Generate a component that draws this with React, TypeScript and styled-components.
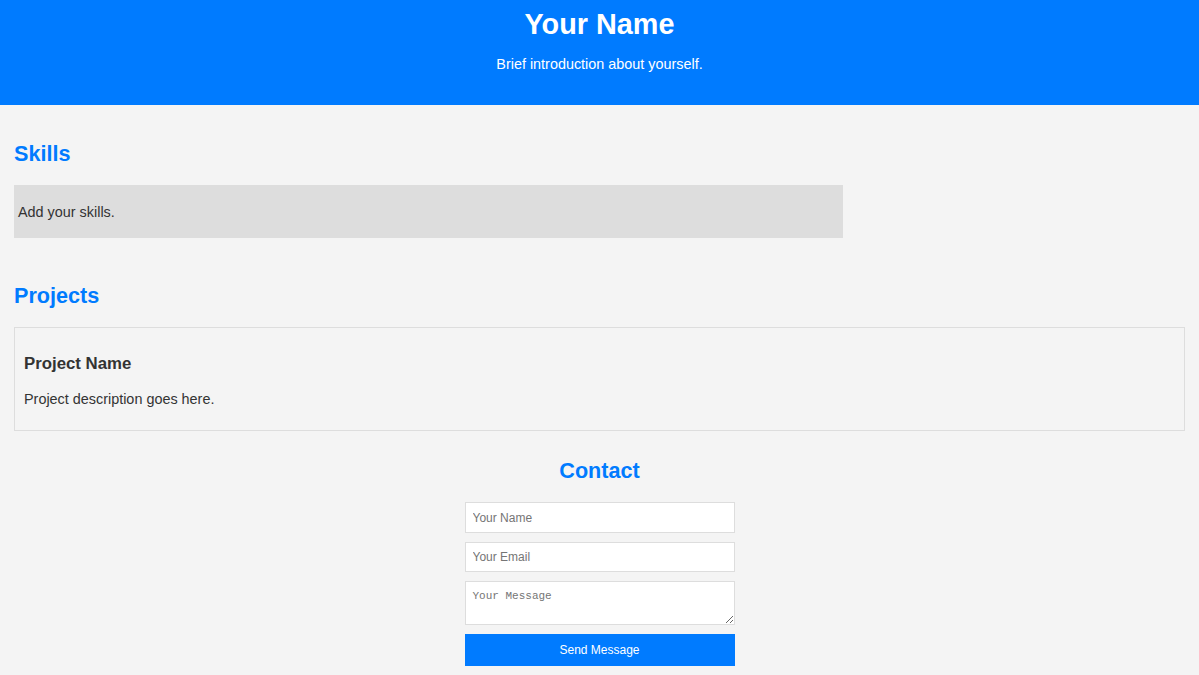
import React from "react";
import styled, { createGlobalStyle } from "styled-components";

const Global = createGlobalStyle`
  html, body { margin: 0; padding: 0; }
  body {
    background: #f4f4f4;
    color: #333;
    font-family: "Liberation Sans", Arial, sans-serif;
    font-size: 14.4px;
  }
  * { box-sizing: border-box; }
`;

const Header = styled.header`
  background: #007bff;
  color: #fff;
  text-align: center;
  height: 105px;
  padding-top: 8px;
`;

const Title = styled.h1`
  margin: 0;
  font-size: 28.8px;
  line-height: 33px;
  font-weight: bold;
`;

const Intro = styled.p`
  margin: 15px 0 0;
  font-size: 14.4px;
  line-height: 16.6px;
`;

const Main = styled.main`
  padding: 0 14px;
`;

const SectionTitle = styled.h2<{ $top: number; $bottom: number; $center?: boolean }>`
  color: #007bff;
  font-size: 21.6px;
  line-height: 25px;
  font-weight: bold;
  margin: ${(p) => p.$top}px 0 ${(p) => p.$bottom}px;
  text-align: ${(p) => (p.$center ? "center" : "left")};
`;

const SkillsBox = styled.div`
  width: 829px;
  background: #ddd;
  padding: 4px;
`;

const Text = styled.p<{ $mt?: number; $mb?: number }>`
  margin: ${(p) => p.$mt ?? 14.4}px 0 ${(p) => p.$mb ?? 14.4}px;
  font-size: 14.4px;
  line-height: 16.6px;
`;

const ProjectCard = styled.div`
  border: 1px solid #ddd;
  padding: 9px;
`;

const ProjectName = styled.h3`
  margin: 16.8px 0 18px;
  font-size: 16.8px;
  line-height: 19px;
  font-weight: bold;
`;

const Form = styled.form`
  width: 270px;
  margin: 0 auto;
  display: flex;
  flex-direction: column;
  gap: 9px;
`;

const Field = styled.input`
  height: 30.5px;
  border: 1px solid #ddd;
  background: #fff;
  padding: 0 7px;
  font-family: "Liberation Sans", Arial, sans-serif;
  font-size: 12px;
  color: #333;
  outline: none;
  &::placeholder { color: #757575; }
`;

const Area = styled.textarea`
  height: 44px;
  border: 1px solid #ddd;
  background: #fff;
  padding: 8px 7px;
  font-family: "Liberation Mono", monospace;
  font-size: 11px;
  line-height: 13px;
  color: #333;
  outline: none;
  &::placeholder { color: #757575; }
`;

const SendButton = styled.button`
  height: 32px;
  border: none;
  background: #007bff;
  color: #fff;
  font-family: "Liberation Sans", Arial, sans-serif;
  font-size: 12px;
  cursor: pointer;
`;

export default function App() {
  return (
    <>
      <Global />
      <Header>
        <Title>Your Name</Title>
        <Intro>Brief introduction about yourself.</Intro>
      </Header>
      <Main>
        <section>
          <SectionTitle $top={36} $bottom={19}>Skills</SectionTitle>
          <SkillsBox>
            <Text $mt={15.4} $mb={13.4}>Add your skills.</Text>
          </SkillsBox>
        </section>
        <section>
          <SectionTitle $top={45} $bottom={19}>Projects</SectionTitle>
          <ProjectCard>
            <ProjectName>Project Name</ProjectName>
            <Text $mt={0} $mb={13.5}>Project description goes here.</Text>
          </ProjectCard>
        </section>
        <section>
          <SectionTitle $top={26.6} $bottom={19.6} $center>Contact</SectionTitle>
          <Form onSubmit={(e) => e.preventDefault()}>
            <Field type="text" placeholder="Your Name" />
            <Field type="email" placeholder="Your Email" />
            <Area placeholder="Your Message" />
            <SendButton type="submit">Send Message</SendButton>
          </Form>
        </section>
      </Main>
    </>
  );
}
